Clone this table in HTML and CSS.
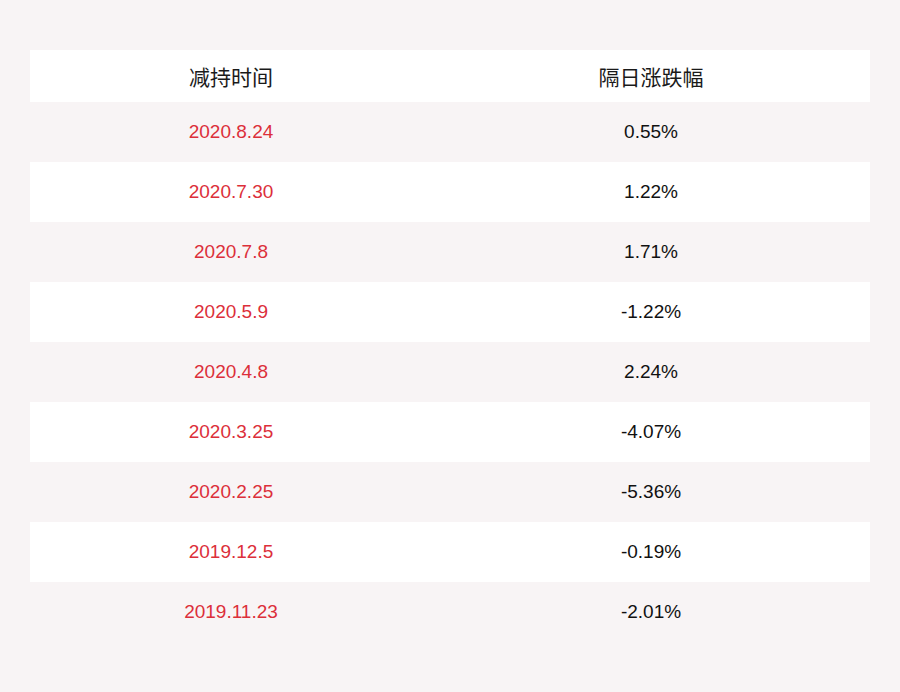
FILE: index.html
```html
<!DOCTYPE html>
<html lang="zh">
<head>
<meta charset="utf-8">
<link rel="stylesheet" href="styles.css">
</head>
<body>
<div class="page">
  <table class="tbl">
    <thead>
      <tr><th class="c1">减持时间</th><th class="c2">隔日涨跌幅</th></tr>
    </thead>
    <tbody>
      <tr><td class="date">2020.8.24</td><td>0.55%</td></tr>
      <tr><td class="date">2020.7.30</td><td>1.22%</td></tr>
      <tr><td class="date">2020.7.8</td><td>1.71%</td></tr>
      <tr><td class="date">2020.5.9</td><td>-1.22%</td></tr>
      <tr><td class="date">2020.4.8</td><td>2.24%</td></tr>
      <tr><td class="date">2020.3.25</td><td>-4.07%</td></tr>
      <tr><td class="date">2020.2.25</td><td>-5.36%</td></tr>
      <tr><td class="date">2019.12.5</td><td>-0.19%</td></tr>
      <tr><td class="date">2019.11.23</td><td>-2.01%</td></tr>
    </tbody>
  </table>
</div>
</body>
</html>
```
FILE: styles.css
```css
html, body {
  margin: 0;
  padding: 0;
  background: #f8f4f5;
}
.page {
  width: 900px;
  height: 692px;
  box-sizing: border-box;
  padding: 50px 30px 0 30px;
}
.tbl {
  width: 840px;
  border-collapse: collapse;
  table-layout: fixed;
  font-family: "Liberation Sans", "Noto Sans CJK SC", sans-serif;
}
.c1 { width: 402px; }
.c2 { width: 438px; }
th {
  height: 52px;
  padding: 0;
  background: #ffffff;
  font-weight: normal;
  font-size: 21px;
  color: #1a1a1a;
  text-align: center;
  vertical-align: middle;
}
td {
  height: 60px;
  padding: 0;
  font-size: 19px;
  color: #111111;
  text-align: center;
  vertical-align: middle;
}
tbody tr:nth-child(even) td {
  background: #ffffff;
}
td.date {
  color: #dc2f3a;
}
```
